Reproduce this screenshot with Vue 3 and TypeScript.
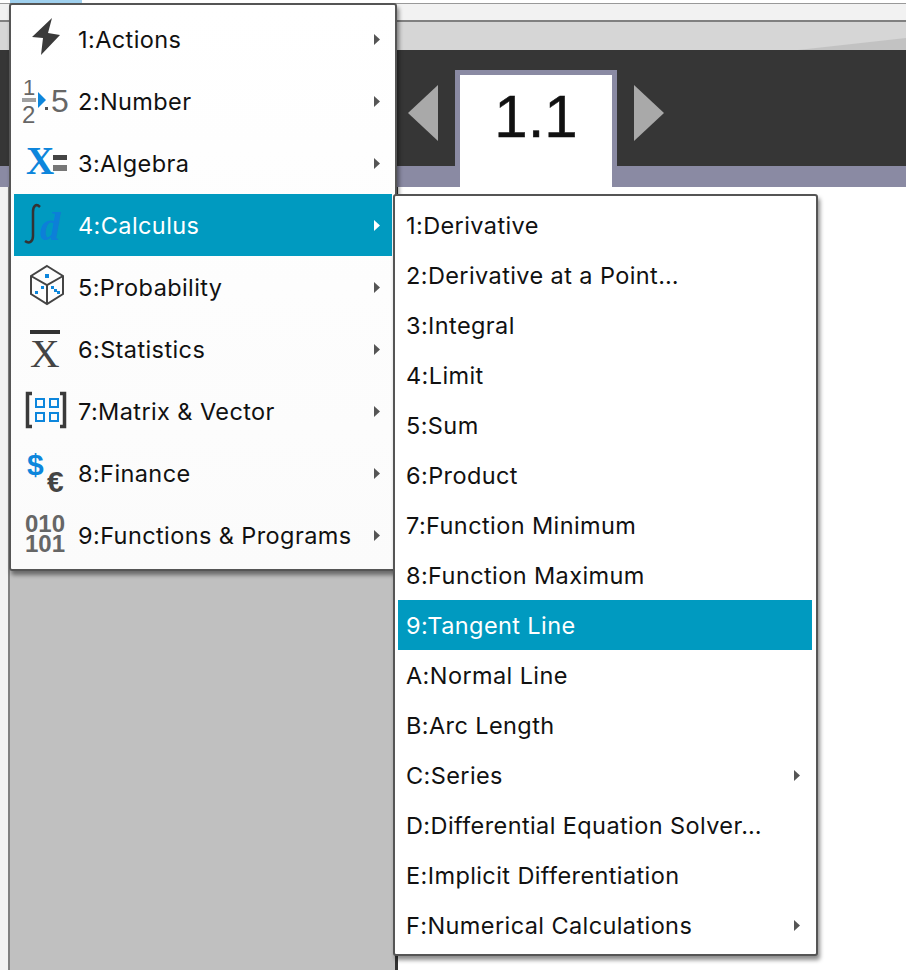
<template>
  <div class="page">
    <div class="top-edge"><span class="top-tab"></span></div>
    <div class="title-strip"></div>
    <div class="tool-strip"><span class="wedge"></span></div>
    <div class="tab-bar">
      <div class="tab-row">
        <svg class="nav" width="34" height="60" viewBox="0 0 34 60"><path d="M2 30 32 2V58Z" fill="#a9a9a9" /></svg>
        <div class="tab">1.1</div>
        <svg class="nav" width="34" height="60" viewBox="0 0 34 60"><path d="M32 30 2 2V58Z" fill="#a9a9a9" /></svg>
      </div>
    </div>
    <div class="tab-base"></div>
    <div class="workspace">
      <div class="gutter"></div>
      <div class="side"></div>
      <div class="sheet"></div>
    </div>

    <div class="menu main-menu">
      <div v-for="item in mainItems" :key="item.label" class="row" :class="{ active: item.active }">
        <svg class="icon" width="64" height="62" viewBox="0 0 64 62">
          <path v-if="item.icon === 'bolt'" d="M38 10 18 29 29 30 27 47 46 27 34 25Z" fill="#3a3a3a" />
          <g v-else-if="item.icon === 'number'">
            <text x="9" y="25" class="frac-top">1</text>
            <rect x="8" y="28" width="14" height="4" fill="#a0a0a0" />
            <text x="8" y="53" class="frac-bottom">2</text>
            <path d="M24 22 32 30 24 38Z" fill="#0d86dc" />
            <rect x="31" y="37" width="3" height="3" fill="#555" />
            <text x="37" y="42" class="five">5</text>
          </g>
          <g v-else-if="item.icon === 'algebra'">
            <text x="12" y="42" class="big-x">X</text>
            <rect x="39" y="23" width="14" height="5" fill="#444" />
            <rect x="39" y="33" width="14" height="6" fill="#777" />
          </g>
          <g v-else-if="item.icon === 'calculus'">
            <path d="M26 13C22 9 19 12 19 18V42C19 48 15 50 11 47" fill="none" stroke="#333" stroke-width="2.5" />
            <text x="26" y="46" class="d">d</text>
          </g>
          <g v-else-if="item.icon === 'dice'">
            <path d="M33 10 49 20V38L33 48 17 38V20ZM17 20 33 29 49 20M33 29V48" fill="none" stroke="#444" stroke-width="2" />
            <g fill="#0d86dc">
              <rect x="31" y="18" width="4" height="4" />
              <rect x="27" y="30" width="3" height="3" />
              <rect x="21" y="35" width="3" height="3" />
              <rect x="37" y="30" width="3" height="3" />
              <rect x="40" y="33" width="3" height="3" />
              <rect x="43" y="35" width="3" height="3" />
            </g>
          </g>
          <g v-else-if="item.icon === 'stats'">
            <rect x="16" y="12" width="30" height="4" fill="#333" />
            <text x="16" y="49" class="stat-x">X</text>
          </g>
          <g v-else-if="item.icon === 'matrix'">
            <path d="M18 13.500H13.500V46.500H18M46 13.500H50.500V46.500H46" fill="none" stroke="#3a3a3a" stroke-width="3.500" />
            <g fill="none" stroke="#0d86dc" stroke-width="2">
              <rect x="22" y="19" width="8" height="8" />
              <rect x="36" y="19" width="8" height="8" />
              <rect x="22" y="33" width="8" height="8" />
              <rect x="36" y="33" width="8" height="8" />
            </g>
          </g>
          <g v-else-if="item.icon === 'finance'">
            <text x="13" y="33" class="dollar">$</text>
            <text x="33" y="50" class="euro">€</text>
          </g>
          <g v-else>
            <text x="11" y="28" class="binary">010</text>
            <text x="11" y="48" class="binary">101</text>
          </g>
        </svg>
        <span class="label">{{ item.label }}</span>
        <svg class="caret" width="6" height="11" viewBox="0 0 6 11"><path d="M0 0 6 5.500 0 11Z" /></svg>
      </div>
    </div>

    <div class="menu sub-menu">
      <div v-for="item in subItems" :key="item.label" class="row" :class="{ active: item.active }">
        <span class="label">{{ item.label }}</span>
        <svg v-if="item.more" class="caret" width="6" height="11" viewBox="0 0 6 11"><path d="M0 0 6 5.500 0 11Z" /></svg>
      </div>
    </div>
  </div>
</template>

<script setup lang="ts">
interface MainItem {
  label: string
  icon: string
  active?: boolean
}

interface SubItem {
  label: string
  more?: boolean
  active?: boolean
}

const mainItems: MainItem[] = [
  { label: '1:Actions', icon: 'bolt' },
  { label: '2:Number', icon: 'number' },
  { label: '3:Algebra', icon: 'algebra' },
  { label: '4:Calculus', icon: 'calculus', active: true },
  { label: '5:Probability', icon: 'dice' },
  { label: '6:Statistics', icon: 'stats' },
  { label: '7:Matrix & Vector', icon: 'matrix' },
  { label: '8:Finance', icon: 'finance' },
  { label: '9:Functions & Programs', icon: 'binary' },
]

const subItems: SubItem[] = [
  { label: '1:Derivative' },
  { label: '2:Derivative at a Point…' },
  { label: '3:Integral' },
  { label: '4:Limit' },
  { label: '5:Sum' },
  { label: '6:Product' },
  { label: '7:Function Minimum' },
  { label: '8:Function Maximum' },
  { label: '9:Tangent Line', active: true },
  { label: 'A:Normal Line' },
  { label: 'B:Arc Length' },
  { label: 'C:Series', more: true },
  { label: 'D:Differential Equation Solver…' },
  { label: 'E:Implicit Differentiation' },
  { label: 'F:Numerical Calculations', more: true },
]
</script>

<style>
html,
body {
  margin: 0;
  overflow: hidden;
}
</style>

<style scoped>
.page {
  position: relative;
  width: 906px;
  height: 970px;
  overflow: hidden;
  background: #fff;
  display: flex;
  flex-direction: column;
  font-family: Inter, "Liberation Sans", sans-serif;
}

.top-edge {
  height: 3px;
  flex: none;
  background: #fff;
  border-bottom: 1px solid #999;
}

.top-tab {
  display: block;
  width: 72px;
  height: 3px;
  margin-left: 10px;
  background: #9fd0ee;
}

.title-strip {
  height: 16px;
  flex: none;
  background: #f2f2f2;
  border-bottom: 2px solid #808080;
}

.tool-strip {
  position: relative;
  height: 28px;
  flex: none;
  background: #d6d6d6;
  overflow: hidden;
}

.wedge {
  position: absolute;
  right: 0;
  bottom: 0;
  width: 108px;
  height: 12px;
  background: #c2c2c2;
  clip-path: polygon(100% 0, 100% 100%, 0 100%);
}

.tab-bar {
  height: 116px;
  flex: none;
  background: #363636;
  box-sizing: border-box;
  padding-left: 406px;
  padding-top: 20px;
}

.tab-row {
  height: 96px;
  display: flex;
  align-items: flex-start;
  gap: 15px;
}

.nav {
  margin-top: 13px;
  flex: none;
}

.tab {
  width: 162px;
  height: 117px;
  box-sizing: border-box;
  flex: none;
  background: #fff;
  border: 5px solid #8a8aa3;
  border-bottom: 0;
  position: relative;
  z-index: 1;
  text-align: center;
  font-size: 60px;
  line-height: 84px;
  color: #111;
  font-family: "Liberation Sans", sans-serif;
  -webkit-text-stroke: 0.5px #111;
}

.tab-base {
  height: 21px;
  flex: none;
  background: #8a8aa3;
}

.workspace {
  flex: 1;
  display: flex;
  min-height: 0;
}

.gutter {
  width: 10px;
  box-sizing: border-box;
  background: #f2f2f2;
  border-right: 2px solid #808080;
}

.side {
  width: 385px;
  background: #c0c0c0;
}

.sheet {
  flex: 1;
  background: #fff;
  border-left: 3px solid #333;
}

.menu {
  position: absolute;
  box-sizing: border-box;
  background: #fff;
  border: 2px solid #555;
  border-radius: 3px;
  box-shadow: 2px 4px 4px rgba(0, 0, 0, 0.45);
  z-index: 2;
  color: #111;
}

.main-menu {
  left: 9px;
  top: 3px;
  width: 388px;
  height: 568px;
  padding: 3px 3px 0 3px;
  background: linear-gradient(#fff, #fbfbfb);
}

.sub-menu {
  left: 393px;
  top: 194px;
  width: 425px;
  height: 762px;
  padding: 4px 4px 0 3px;
}

.row {
  display: flex;
  align-items: center;
  font-size: 23.5px;
  letter-spacing: 0.4px;
  position: relative;
}

.main-menu .row {
  height: 62px;
}

.sub-menu .row {
  height: 50px;
  padding-left: 8px;
}

.row.active {
  background: #009ac0;
  color: #fff;
}

.icon {
  flex: none;
}

.label {
  flex: 1;
  white-space: nowrap;
}

.caret {
  flex: none;
  fill: #555;
  margin-right: 12px;
}

.row.active .caret {
  fill: #fff;
}

svg text {
  font-family: "Liberation Sans", sans-serif;
  letter-spacing: 0;
}

.frac-top {
  font-size: 22px;
  fill: #666;
}

.frac-bottom {
  font-size: 24px;
  fill: #666;
}

.five {
  font-size: 32px;
  fill: #666;
}

svg .big-x {
  font-family: "Liberation Serif", serif;
  font-size: 39px;
  font-weight: bold;
  fill: #0d86dc;
}

svg .d {
  font-family: "Liberation Serif", serif;
  font-size: 41px;
  font-style: italic;
  font-weight: bold;
  fill: #0d7fd8;
}

svg .stat-x {
  font-family: "Liberation Serif", serif;
  font-size: 41px;
  fill: #444;
}

.dollar {
  font-size: 30px;
  font-weight: bold;
  fill: #0d86dc;
}

.euro {
  font-size: 30px;
  font-weight: bold;
  fill: #444;
}

.binary {
  font-size: 24px;
  font-weight: bold;
  fill: #666;
}
</style>
